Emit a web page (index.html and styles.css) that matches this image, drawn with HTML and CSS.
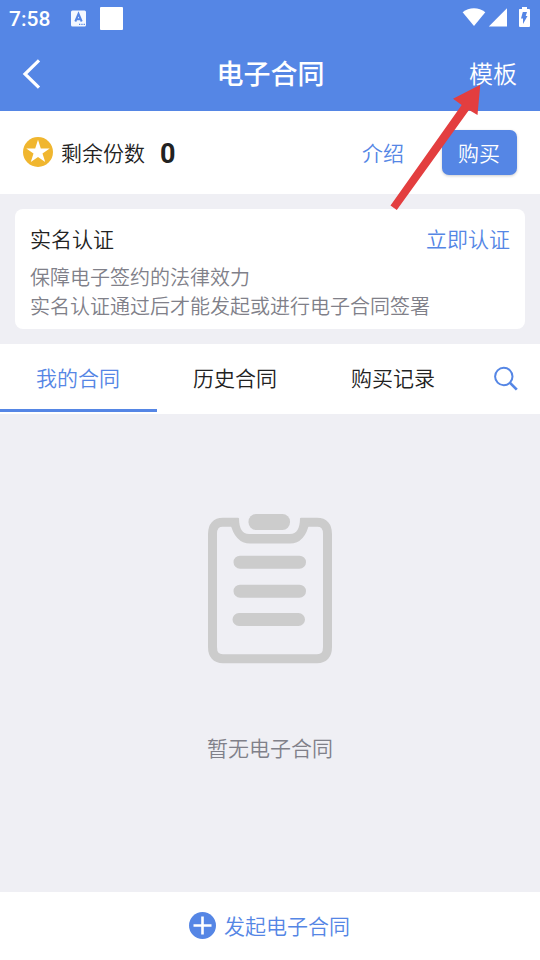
FILE: index.html
```
<!DOCTYPE html>
<html lang="zh-CN">
<head>
<meta charset="utf-8">
<title>电子合同</title>
<link rel="stylesheet" href="styles.css">
</head>
<body>
<div class="app">
  <header class="header">
    <div class="status">
      <span class="time">7:58</span>
      <svg class="ime" width="15" height="17" viewBox="0 0 15 17">
        <rect y=".5" width="15" height="16" rx="1.5" fill="#f4f8ff"/>
        <path d="M4.300 11.500 7.500 3.800l3.200 7.700M5.500 9.300h4" fill="none" stroke="#5586e5" stroke-width="2"/>
        <path d="M8 14.300h6" stroke="#5586e5" stroke-width="1.200" stroke-dasharray="1.300 1"/>
      </svg>
      <span class="block"></span>
      <svg class="signals" width="70" height="22" viewBox="0 0 70 22" fill="#fff">
        <path d="M2.600 5.200C9-.2 18.900-.2 25.300 5.200L14 19z"/>
        <path d="M28.800 19.500 47 1.300V19.500z"/>
        <path d="M59.500 2h2.500V0h5v2h2q1 0 1 1v16q0 1-1 1h-9q-1 0-1-1V3q0-1 .5-1z"/>
        <path d="M62.800 5h4.200l-1.300 4h1.800l-4.500 8v-5.500h-2z" fill="#5586e5"/>
      </svg>
    </div>
    <nav class="nav">
      <svg class="back" width="20" height="34" viewBox="0 0 20 34"><path d="M17 3.300 3 17l14 13.700" fill="none" stroke="#fff" stroke-width="3.200"/></svg>
      <h1>电子合同</h1>
      <span class="template">模板</span>
    </nav>
  </header>

  <section class="quota">
    <svg class="coin" width="30" height="30" viewBox="0 0 30 30">
      <circle cx="15" cy="15" r="15" fill="#f0b62f"/>
      <path d="m15 2.800 2.800 8.600h8.900l-7.200 5.200 2.700 8.500-7.200-5.200-7.200 5.200 2.700-8.500-7.200-5.200h8.900z" fill="#fff"/>
    </svg>
    <span class="quota-label">剩余份数</span>
    <b class="count">0</b>
    <a class="intro">介绍</a>
    <button class="buy">购买</button>
  </section>

  <section class="card">
    <div class="card-head"><span>实名认证</span><a>立即认证</a></div>
    <p>保障电子签约的法律效力<br>实名认证通过后才能发起或进行电子合同签署</p>
  </section>

  <div class="tabs">
    <span class="tab active">我的合同</span>
    <span class="tab">历史合同</span>
    <span class="tab last">购买记录</span>
    <span class="search">
      <svg width="26" height="26" viewBox="0 0 26 26" fill="none" stroke="#5586e5"><circle cx="10.800" cy="10.500" r="8.700" stroke-width="2"/><path d="m16.800 16.600 7 7" stroke-width="2.700"/></svg>
    </span>
  </div>

  <main class="empty">
    <svg width="126" height="152" viewBox="0 0 126 152" fill="none" stroke="#ccc">
      <path d="M31 9.200H16Q5.500 9.200 5.500 21V134Q5.500 145.700 16 145.700H110Q120.500 145.700 120.500 134V21Q120.500 9.200 110 9.200H94" stroke-width="9"/>
      <path d="M23 9.500Q28 30.500 43 30.500H83Q98 30.500 102.500 9.500L93 4.700Q93 21 83 21H42Q32 21 32 4.700z" fill="#ccc" stroke="none"/>
      <rect x="41.500" y="1" width="41.500" height="16" rx="7.500" fill="#ccc" stroke="none"/>
      <path d="M33 49.200h59.500M33 78.200h59.500M32 106.500h59.500" stroke-width="13" stroke-linecap="round"/>
    </svg>
    <p>暂无电子合同</p>
  </main>

  <footer class="footer">
    <svg width="27" height="27" viewBox="0 0 27 27"><circle cx="13.500" cy="13.500" r="13.500" fill="#5586e5"/><path d="M4.500 13.500h18M13.500 4.500v18" stroke="#fff" stroke-width="2.600"/></svg>
    <span>发起电子合同</span>
  </footer>

  <svg class="pointer" width="94" height="128" viewBox="0 0 94 128" fill="#e33e3f"><path d="M.5 120.500 71.700 20l-8.700-6.300L90.300-.3 87.500 30 79 25 6.800 125z"/></svg>
</div>
</body>
</html>
```
FILE: styles.css
```
* { box-sizing: border-box; }
body, h1, p { margin: 0; }
body {
  font-family: Roboto, "Noto Sans CJK SC", sans-serif;
  font-size: 21px;
  font-weight: 350;
  line-height: 30px;
  color: #222;
}
.app {
  position: relative;
  display: flex;
  flex-direction: column;
  width: 540px;
  height: 960px;
  background: #efeff4;
  overflow: hidden;
}
.header { height: 111px; background: #5586e5; color: #fff; }
.status { display: flex; align-items: center; height: 37px; padding: 0 10px 0 9px; }
.time { width: 62px; font-weight: 500; font-size: 21px; }
.block { width: 23px; height: 23px; margin-left: 14px; border-radius: 1px; background: #fff; }
.signals { margin-left: auto; margin-bottom: 2px; }
.nav { display: grid; grid-template-columns: 1fr auto 1fr; align-items: center; height: 74px; padding: 0 22px 0 22px; }
.nav h1 { padding: 2px 0 0 1px; font-size: 27px; font-weight: 500; line-height: 40px; }
.template { justify-self: end; padding: 2px 1px 0 0; font-size: 24px; }
.quota { display: flex; align-items: center; height: 83px; padding: 0 23px; background: #fff; }
.quota > span, .count, .intro { padding-top: 2px; }
.coin { margin: 0 8px 2px 0; }
.count { margin-left: 15px; font-size: 27px; font-weight: 700; }
.intro { margin-left: auto; color: #5586e5; }
.buy {
  width: 75px;
  height: 45px;
  margin-left: 38px;
  padding: 2px 1px 0 0;
  border: 0;
  border-radius: 7px;
  background: #5586e5;
  box-shadow: 0 1px 3px rgba(0, 0, 0, .2);
  color: #fff;
  font: inherit;
}
.card { height: 120px; margin: 15px; padding: 16px 15px; border-radius: 8px; background: #fff; }
.card-head { display: flex; justify-content: space-between; }
.card-head a { color: #5586e5; }
.card p { margin-top: 9px; font-size: 20px; line-height: 29px; color: #808089; white-space: nowrap; }
.tabs { display: flex; height: 70px; background: #fff; }
.tab { width: 157px; padding: 20px 1px 0 0; height: 68px; text-align: center; }
.last { padding: 20px 0 0 1px; }
.active { color: #5586e5; border-bottom: 3px solid #5586e5; }
.search { flex: 1; display: flex; align-items: center; justify-content: center; padding-left: 1px; }
.empty { flex: 1; display: flex; flex-direction: column; align-items: center; padding-top: 99px; color: #808089; }
.empty p { margin-top: 69px; }
.footer { display: flex; align-items: center; justify-content: center; gap: 8px; height: 68px; padding-right: 1px; background: #fff; color: #5586e5; }
.footer svg { margin-bottom: 2px; }
.footer span { padding-top: 2px; }
.pointer { position: absolute; left: 390px; top: 85px; overflow: visible; }
```
